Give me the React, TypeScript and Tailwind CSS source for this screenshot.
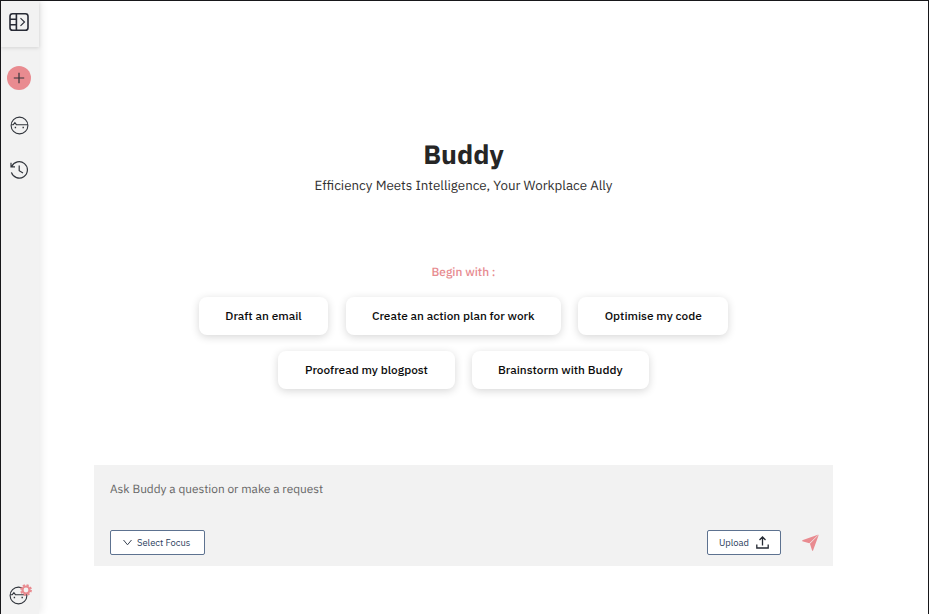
import type { ReactNode } from "react";

function Prompt({ width, children }: { width: string; children: ReactNode }) {
  return (
    <button className={`${width} h-[37.5px] rounded-lg bg-white text-center text-[11.85px] font-medium whitespace-nowrap text-[#0c0c0c] shadow-[0_2px_8px_rgba(0,0,0,0.16)]`}>
      {children}
    </button>
  );
}

function Face({ className }: { className: string }) {
  return (
    <svg className={className} viewBox="0 0 19 19" fill="none" stroke="#30343b" strokeWidth="1.1">
      <circle cx="9.5" cy="9.5" r="8.4" />
      <path d="M1.1 8.7h2.2l1.6-2 1.5 2h11.5" />
      <path d="M5.4 10.8v1.5M13.2 10.8v1.5" strokeWidth="1.4" />
    </svg>
  );
}

function Sidebar() {
  return (
    <aside className="flex h-full w-[38px] shrink-0 flex-col items-center bg-[#f2f2f2] shadow-[2px_0_8px_rgba(0,0,0,0.09)]">
      <div className="flex h-[46px] w-full shrink-0 justify-center pt-[11px] pr-[2px] shadow-[0_1px_4px_rgba(0,0,0,0.13)]">
        <svg className="h-5 w-5" viewBox="0 0 20 20" fill="none" stroke="#272a35" strokeWidth="1.6">
          <rect x="1" y="1.7" width="18" height="16.6" rx="2.6" />
          <path d="M7.4 1.7v16.6M1 7.2h6.4M1 12.8h6.4" />
          <path d="M11.5 6.2l4 3.8-4 3.8" strokeWidth="1.1" />
        </svg>
      </div>
      <button className="mt-[19px] mr-[2px] flex h-6 w-6 shrink-0 items-center justify-center rounded-full bg-[#e98b90]">
        <svg className="h-3 w-3" viewBox="0 0 12 12" stroke="#34343a" strokeWidth="1.2"><path d="M6 .8v10.4M.8 6h10.4" /></svg>
      </button>
      <Face className="mt-[26px] mr-px h-[19px] w-[19px] shrink-0" />
      <svg className="mt-[26px] mr-px h-[19px] w-[19px] shrink-0" viewBox="0 0 19 19" fill="none" stroke="#30343b" strokeWidth="1.2">
        <path d="M1.7 5.6A8.2 8.2 0 1 1 1.4 11.4M1 1.8v4h4M9.2 4.5v5.2l3.8 2.2" />
      </svg>
      <div className="relative mt-auto mr-[3px] mb-[9px] h-[19px] w-[19px] shrink-0">
        <Face className="h-[19px] w-[19px]" />
        <svg className="absolute -top-[2px] left-[11px] h-3 w-3" viewBox="0 0 12 12">
          <circle cx="6" cy="6" r="3.5" fill="#f2f2f2" stroke="#e98b90" strokeWidth="2.2" />
          <circle cx="6" cy="6" r="5" fill="none" stroke="#e98b90" strokeWidth="1.8" strokeDasharray="2.2 1.727" />
        </svg>
      </div>
    </aside>
  );
}

export default function App() {
  return (
    <div className="flex h-[614px] w-[929px] overflow-hidden border-x border-t border-[#17171a] bg-white font-['IBM_Plex_Sans',Roboto,sans-serif] [text-rendering:geometricPrecision]">
      <Sidebar />
      <main className="flex min-w-0 flex-1 flex-col pl-[55px]">
        <div className="flex w-[739px] flex-col items-center">
          <h1 className="mt-[136px] h-9 text-[26.7px] leading-9 font-bold text-[#262626]">Buddy</h1>
          <p className="mt-[2px] h-5 text-[13.35px] leading-5 whitespace-nowrap text-[#303030]">Efficiency Meets Intelligence, Your Workplace Ally</p>
          <p className="mt-[68px] h-5 text-[11.9px] leading-5 font-medium text-[#e78b90]">Begin with :</p>
          <div className="mt-[14px] flex gap-[17.5px]">
            <Prompt width="w-[129.5px]">Draft an email</Prompt>
            <Prompt width="w-[215px]">Create an action plan for work</Prompt>
            <Prompt width="w-[150px]">Optimise my code</Prompt>
          </div>
          <div className="mt-[16.5px] flex gap-[17px]">
            <Prompt width="w-[176.5px]">Proofread my blogpost</Prompt>
            <Prompt width="w-[177px]">Brainstorm with Buddy</Prompt>
          </div>
        </div>
        <section className="mt-[76.5px] flex h-[101px] w-[739px] flex-col justify-between bg-[#f2f2f2] pt-[15px] pr-[14px] pb-[11px] pl-4">
          <p className="text-[11.85px] leading-5 text-[#666666]">Ask Buddy a question or make a request</p>
          <div className="flex items-center">
            <button className="flex h-[25px] w-[94.5px] items-center rounded-[2px] border border-[#5d7290] bg-white pl-3 text-[9.4px] whitespace-nowrap text-[#2b405d]">
              <svg className="mr-[5px] h-[9px] w-[9px]" viewBox="0 0 9 9" fill="none" stroke="#384252" strokeWidth="1"><path d="M.5 2l4 4.8 4-4.8" /></svg>
              <span className="pt-[2px]">Select Focus</span>
            </button>
            <button className="ml-auto flex h-[25px] w-[73.5px] items-center rounded-[2px] border border-[#5d7290] bg-white pl-[11px] text-[9.4px] whitespace-nowrap text-[#2b405d]">
              <span className="pt-px">Upload</span>
              <svg className="ml-auto mr-[11px] h-[13px] w-[13px]" viewBox="0 0 13 13" fill="none" stroke="#252a33" strokeWidth="1.3"><path d="M6.5 9.5V1M3.5 4l3-3 3 3M.8 8.5v3.5h11.4V8.5" /></svg>
            </button>
            <svg className="mb-px ml-[21.5px] h-[17px] w-[17px]" viewBox="0 0 18 18" fill="#e98b90"><path d="M17.5.4L.3 6.6v1l7.5 2.3L17.5.4zM17.8.7L8.4 10.4l2.4 7.3h.8z" /></svg>
          </div>
        </section>
      </main>
    </div>
  );
}
